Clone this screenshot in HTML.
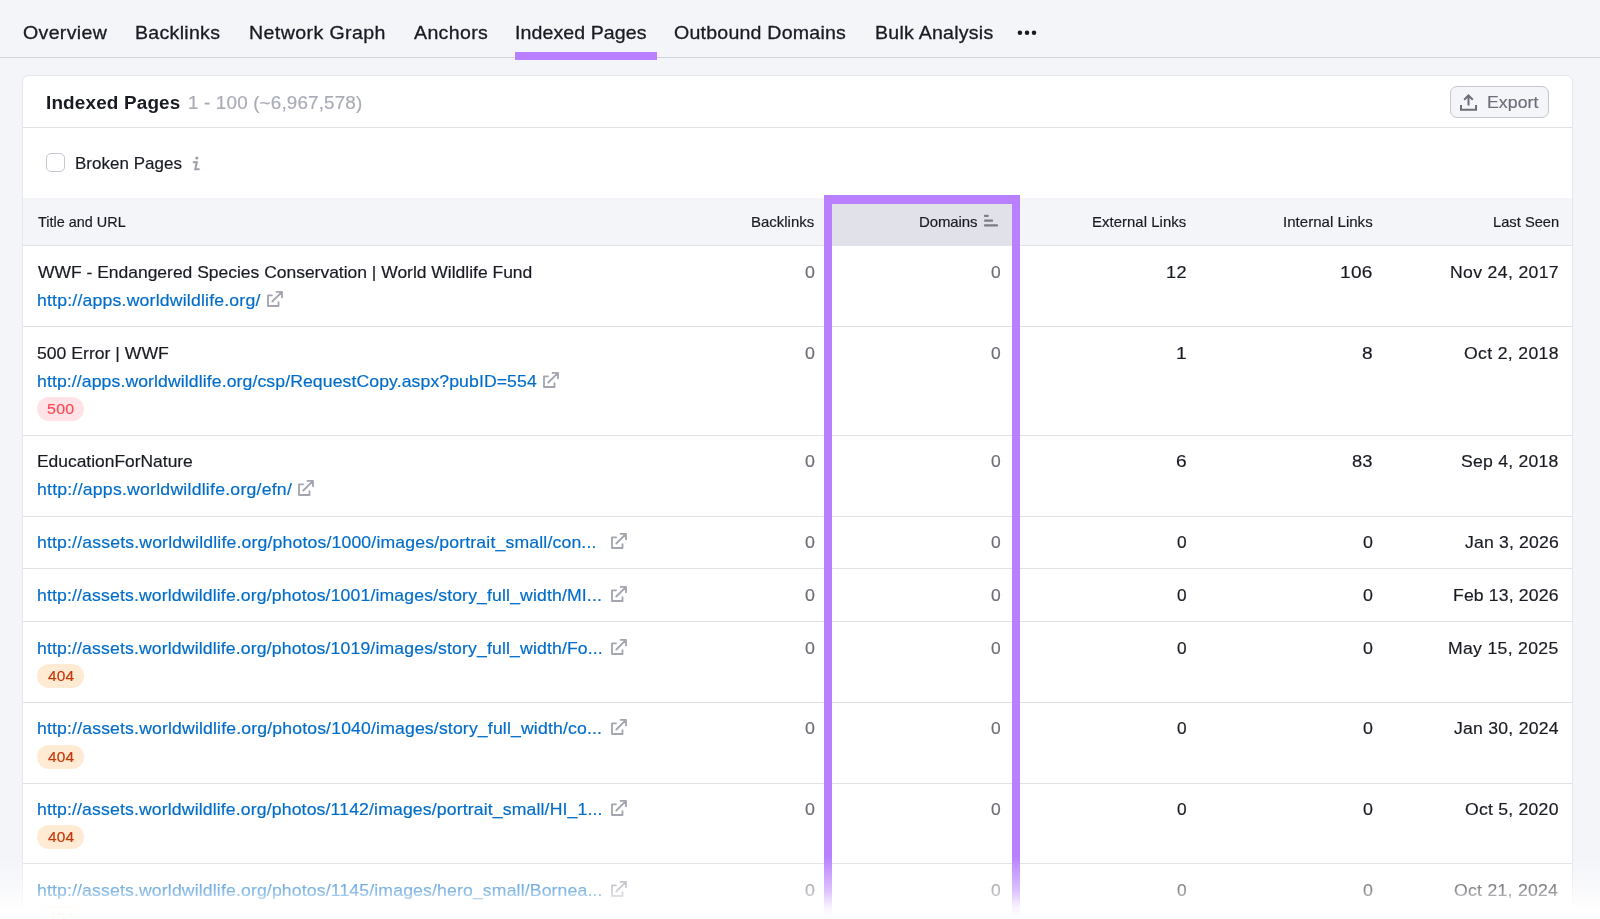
<!DOCTYPE html>
<html lang="en">
<head>
<meta charset="utf-8">
<title>Indexed Pages</title>
<style>
*{box-sizing:border-box;margin:0;padding:0}
html,body{width:1600px;height:919px;overflow:hidden}
body{background:#f4f5f9;font-family:"Liberation Sans",Arial,sans-serif;color:#191b23;position:relative}
/* every text node is placed by measured ink extents; .x = absolutely positioned text */
.x{position:absolute;white-space:pre;will-change:transform;transform-origin:0 0}
.tabline{position:absolute;left:0;top:57px;width:1600px;height:1px;background:#d1d4db}
.tab-ul{position:absolute;left:515px;top:52px;width:142px;height:8px;background:#b880ff}
.card{position:absolute;left:22px;top:75px;width:1551px;height:900px;background:#fff;border:1px solid #e6e7ee;border-radius:7px}
.hline{position:absolute;left:23px;width:1549px;height:1px;background:#e0e1e9}
.btn{position:absolute;left:1450px;top:86px;width:99px;height:32px;border:1px solid #c4c7cf;border-radius:7px;background:#f4f5f9}
.cb{position:absolute;left:46px;top:153px;width:19px;height:19px;border:1px solid #c4c7cf;border-radius:5px;background:#fff}
.thead-bg{position:absolute;left:23px;top:198px;width:1549px;height:47px;background:#f4f5f9}
.sorted{position:absolute;left:828px;top:198px;width:186px;height:47px;background:#e0e1e9}
.badge{position:absolute;width:47px;height:24px;border-radius:12px}
.b500{background:#ffe3e6}
.b404{background:#ffebd3}
.ext{position:absolute;overflow:visible}
.ic{position:absolute;overflow:visible}
.purple{position:absolute;left:824px;top:195px;width:196px;height:760px;border:8px solid #b880ff;border-top-width:9px;border-bottom:none}
.fade{position:absolute;left:0;top:856px;width:1600px;height:63px;background:linear-gradient(to bottom,rgba(255,255,255,0) 0%,rgba(255,255,255,.5) 54%,rgba(255,255,255,.9) 81%,rgba(255,255,255,1) 100%)}
</style>
</head>
<body>
<nav class="tabs">
<div class="tabline"></div>
<div class="x" style="left:22.8px;top:22.0px;font-size:18.2px;line-height:23px;color:#191b23;-webkit-text-stroke:0.3px;letter-spacing:0.315px;transform:scaleX(1.075);">Overview</div>
<div class="x" style="left:135.2px;top:22.0px;font-size:18.2px;line-height:23px;color:#191b23;-webkit-text-stroke:0.3px;letter-spacing:0.276px;transform:scaleX(1.075);">Backlinks</div>
<div class="x" style="left:248.5px;top:22.0px;font-size:18.2px;line-height:23px;color:#191b23;-webkit-text-stroke:0.3px;letter-spacing:0.381px;transform:scaleX(1.075);">Network Graph</div>
<div class="x" style="left:413.5px;top:22.0px;font-size:18.2px;line-height:23px;color:#191b23;-webkit-text-stroke:0.3px;letter-spacing:0.317px;transform:scaleX(1.075);">Anchors</div>
<div class="x" style="left:515.0px;top:22.0px;font-size:18.2px;line-height:23px;color:#191b23;-webkit-text-stroke:0.3px;letter-spacing:0.078px;transform:scaleX(1.075);">Indexed Pages</div>
<div class="x" style="left:674.0px;top:22.0px;font-size:18.2px;line-height:23px;color:#191b23;-webkit-text-stroke:0.3px;letter-spacing:0.209px;transform:scaleX(1.075);">Outbound Domains</div>
<div class="x" style="left:874.5px;top:22.0px;font-size:18.2px;line-height:23px;color:#191b23;-webkit-text-stroke:0.3px;letter-spacing:0.237px;transform:scaleX(1.075);">Bulk Analysis</div>
<svg class="ic" style="left:1016px;top:29px" width="22" height="8" viewBox="0 0 22 8"><circle cx="3.900" cy="3.800" r="2.250" fill="#191b23"/><circle cx="11" cy="3.800" r="2.250" fill="#191b23"/><circle cx="18" cy="3.800" r="2.250" fill="#191b23"/></svg>
<div class="tab-ul"></div>
</nav>
<main>
<div class="card"></div>
<header class="card-head">
<div class="x" style="left:46.0px;top:92.0px;font-size:17.6px;line-height:22px;color:#191b23;font-weight:bold;letter-spacing:0.144px;transform:scaleX(1.075);">Indexed Pages</div>
<div class="x" style="left:188.3px;top:92.0px;font-size:17.5px;line-height:22px;color:#a9abb6;-webkit-text-stroke:0.18px;letter-spacing:0.158px;transform:scaleX(1.075);">1 - 100 (~6,967,578)</div>
<div class="btn"></div>
<svg class="ic" style="left:1460px;top:93px" width="18" height="18" viewBox="0 0 18 18" fill="none" stroke="#6c6e79" stroke-width="2" stroke-linecap="butt" stroke-linejoin="miter"><path d="M8.500 12.500V3M4.200 6.800L8.500 2.500l4.300 4.300M1 12v4.700h15V12"/></svg>
<div class="x" style="left:1486.5px;top:92.0px;font-size:16.4px;line-height:20px;color:#6c6e79;-webkit-text-stroke:0.18px;letter-spacing:0.102px;transform:scaleX(1.075);">Export</div>
<div class="hline" style="top:127px"></div>
</header>
<div class="filters">
<div class="cb"></div>
<div class="x" style="left:74.5px;top:153.0px;font-size:16.4px;line-height:20px;color:#191b23;-webkit-text-stroke:0.18px;letter-spacing:0.044px;transform:scaleX(1.0343);">Broken Pages</div>
<svg class="ic" style="left:190px;top:155px" width="12" height="17" viewBox="0 0 12 17" fill="none" stroke="#9c9eaa" stroke-width="2" stroke-linejoin="miter"><circle cx="6.800" cy="3" r="1.600" fill="#9c9eaa" stroke="none"/><path d="M2.800 7.200H6.800L5.300 14.200H9.600"/></svg>
</div>
<div class="table">
<div class="thead">
<div class="thead-bg"></div>
<div class="sorted"></div>
<div class="hline" style="top:245px"></div>
<div class="x" style="left:38.0px;top:213.0px;font-size:14.3px;line-height:18px;color:#191b23;-webkit-text-stroke:0.18px;letter-spacing:0.008px;transform:scaleX(1.008);">Title and URL</div>
<div class="x" style="left:750.9px;top:213.0px;font-size:14.3px;line-height:18px;color:#191b23;-webkit-text-stroke:0.18px;letter-spacing:0.012px;transform:scaleX(1.0458);">Backlinks</div>
<div class="x" style="left:918.7px;top:213.0px;font-size:14.3px;line-height:18px;color:#191b23;-webkit-text-stroke:0.18px;letter-spacing:-0.08px;transform:scaleX(1.0455);">Domains</div>
<div class="x" style="left:1092.1px;top:213.0px;font-size:14.3px;line-height:18px;color:#191b23;-webkit-text-stroke:0.18px;letter-spacing:0.058px;transform:scaleX(1.0404);">External Links</div>
<div class="x" style="left:1283.0px;top:213.0px;font-size:14.3px;line-height:18px;color:#191b23;-webkit-text-stroke:0.18px;letter-spacing:0.014px;transform:scaleX(1.0524);">Internal Links</div>
<div class="x" style="left:1492.6px;top:213.0px;font-size:14.3px;line-height:18px;color:#191b23;-webkit-text-stroke:0.18px;letter-spacing:0.011px;transform:scaleX(1.027);">Last Seen</div>
<svg class="ic" style="left:983px;top:213px" width="16" height="14" viewBox="0 0 16 14" fill="none" stroke="#7b7d88" stroke-width="2.200" stroke-linecap="round"><path d="M2 2.900H4.700M2 7.700H9.100M2 12.400H14"/></svg>
</div>
<div class="row">
<svg class="ext" style="left:267px;top:291px" width="16" height="16" viewBox="0 0 16 16" fill="none" stroke="#a3a5b0" stroke-width="1.850" stroke-linecap="round" stroke-linejoin="round"><path d="M5 4.300H1V15H11.500V11.200"/><path d="M5.300 10.500L15 0.900M9.600 0.900H15V6.300"/></svg>
<div class="x" style="left:38.0px;top:262.0px;font-size:16.4px;line-height:20px;color:#191b23;-webkit-text-stroke:0.18px;letter-spacing:-0.009px;transform:scaleX(1.0665);">WWF - Endangered Species Conservation | World Wildlife Fund</div>
<div class="x" style="left:37.0px;top:290.0px;font-size:16.4px;line-height:20px;color:#006dca;-webkit-text-stroke:0.18px;letter-spacing:0.19px;transform:scaleX(1.075);">http://apps.worldwildlife.org/</div>
<div class="x" style="left:804.8px;top:262.0px;font-size:16.4px;line-height:20px;color:#6c6e79;-webkit-text-stroke:0.18px;transform:scaleX(1.0889);">0</div>
<div class="x" style="left:990.6px;top:262.0px;font-size:16.4px;line-height:20px;color:#6c6e79;-webkit-text-stroke:0.18px;transform:scaleX(1.0667);">0</div>
<div class="x" style="left:1165.5px;top:262.0px;font-size:16.4px;line-height:20px;color:#191b23;-webkit-text-stroke:0.18px;letter-spacing:0.361px;transform:scaleX(1.1059);">12</div>
<div class="x" style="left:1339.8px;top:262.0px;font-size:16.4px;line-height:20px;color:#191b23;-webkit-text-stroke:0.18px;letter-spacing:0.258px;transform:scaleX(1.1615);">106</div>
<div class="x" style="left:1449.5px;top:262.0px;font-size:16.4px;line-height:20px;color:#191b23;-webkit-text-stroke:0.18px;letter-spacing:0.321px;transform:scaleX(1.075);">Nov 24, 2017</div>
<div class="hline" style="top:326px"></div>
</div>
<div class="row">
<svg class="ext" style="left:543px;top:371.6px" width="16" height="16" viewBox="0 0 16 16" fill="none" stroke="#a3a5b0" stroke-width="1.850" stroke-linecap="round" stroke-linejoin="round"><path d="M5 4.300H1V15H11.500V11.200"/><path d="M5.300 10.500L15 0.900M9.600 0.900H15V6.300"/></svg>
<div class="badge b500" style="left:37px;top:397px"></div>
<div class="x" style="left:37.0px;top:343.0px;font-size:16.4px;line-height:20px;color:#191b23;-webkit-text-stroke:0.18px;transform:scaleX(1.0744);">500 Error | WWF</div>
<div class="x" style="left:37.0px;top:371.0px;font-size:16.4px;line-height:20px;color:#006dca;-webkit-text-stroke:0.18px;letter-spacing:0.093px;transform:scaleX(1.075);">http://apps.worldwildlife.org/csp/RequestCopy.aspx?pubID=554</div>
<div class="x" style="left:46.6px;top:400.0px;font-size:14.8px;line-height:18px;color:#ff4953;-webkit-text-stroke:0.18px;letter-spacing:0.315px;transform:scaleX(1.075);">500</div>
<div class="x" style="left:804.8px;top:343.0px;font-size:16.4px;line-height:20px;color:#6c6e79;-webkit-text-stroke:0.18px;transform:scaleX(1.0889);">0</div>
<div class="x" style="left:990.6px;top:343.0px;font-size:16.4px;line-height:20px;color:#6c6e79;-webkit-text-stroke:0.18px;transform:scaleX(1.0667);">0</div>
<div class="x" style="left:1175.5px;top:343.0px;font-size:16.4px;line-height:20px;color:#191b23;-webkit-text-stroke:0.18px;transform:scaleX(1.17);">1</div>
<div class="x" style="left:1361.8px;top:343.0px;font-size:16.4px;line-height:20px;color:#191b23;-webkit-text-stroke:0.18px;transform:scaleX(1.17);">8</div>
<div class="x" style="left:1463.5px;top:343.0px;font-size:16.4px;line-height:20px;color:#191b23;-webkit-text-stroke:0.18px;letter-spacing:0.313px;transform:scaleX(1.075);">Oct 2, 2018</div>
<div class="hline" style="top:435px"></div>
</div>
<div class="row">
<svg class="ext" style="left:298px;top:480px" width="16" height="16" viewBox="0 0 16 16" fill="none" stroke="#a3a5b0" stroke-width="1.850" stroke-linecap="round" stroke-linejoin="round"><path d="M5 4.300H1V15H11.500V11.200"/><path d="M5.300 10.500L15 0.900M9.600 0.900H15V6.300"/></svg>
<div class="x" style="left:37.0px;top:451.0px;font-size:16.4px;line-height:20px;color:#191b23;-webkit-text-stroke:0.18px;transform:scaleX(1.0621);">EducationForNature</div>
<div class="x" style="left:37.0px;top:479.0px;font-size:16.4px;line-height:20px;color:#006dca;-webkit-text-stroke:0.18px;letter-spacing:0.225px;transform:scaleX(1.075);">http://apps.worldwildlife.org/efn/</div>
<div class="x" style="left:804.8px;top:451.0px;font-size:16.4px;line-height:20px;color:#6c6e79;-webkit-text-stroke:0.18px;transform:scaleX(1.0889);">0</div>
<div class="x" style="left:990.6px;top:451.0px;font-size:16.4px;line-height:20px;color:#6c6e79;-webkit-text-stroke:0.18px;transform:scaleX(1.0667);">0</div>
<div class="x" style="left:1175.5px;top:451.0px;font-size:16.4px;line-height:20px;color:#191b23;-webkit-text-stroke:0.18px;transform:scaleX(1.17);">6</div>
<div class="x" style="left:1351.8px;top:451.0px;font-size:16.4px;line-height:20px;color:#191b23;-webkit-text-stroke:0.18px;letter-spacing:0.001px;transform:scaleX(1.1176);">83</div>
<div class="x" style="left:1460.5px;top:451.0px;font-size:16.4px;line-height:20px;color:#191b23;-webkit-text-stroke:0.18px;letter-spacing:0.213px;transform:scaleX(1.075);">Sep 4, 2018</div>
<div class="hline" style="top:516px"></div>
</div>
<div class="row">
<svg class="ext" style="left:611px;top:533px" width="16" height="16" viewBox="0 0 16 16" fill="none" stroke="#a3a5b0" stroke-width="1.850" stroke-linecap="round" stroke-linejoin="round"><path d="M5 4.300H1V15H11.500V11.200"/><path d="M5.300 10.500L15 0.900M9.600 0.900H15V6.300"/></svg>
<div class="x" style="left:37.0px;top:532.0px;font-size:16.4px;line-height:20px;color:#006dca;-webkit-text-stroke:0.18px;letter-spacing:0.156px;transform:scaleX(1.075);">http://assets.worldwildlife.org/photos/1000/images/portrait_small/con...</div>
<div class="x" style="left:804.8px;top:532.0px;font-size:16.4px;line-height:20px;color:#6c6e79;-webkit-text-stroke:0.18px;transform:scaleX(1.0889);">0</div>
<div class="x" style="left:990.6px;top:532.0px;font-size:16.4px;line-height:20px;color:#6c6e79;-webkit-text-stroke:0.18px;transform:scaleX(1.0667);">0</div>
<div class="x" style="left:1176.5px;top:532.0px;font-size:16.4px;line-height:20px;color:#191b23;-webkit-text-stroke:0.18px;transform:scaleX(1.0556);">0</div>
<div class="x" style="left:1362.8px;top:532.0px;font-size:16.4px;line-height:20px;color:#191b23;-webkit-text-stroke:0.18px;transform:scaleX(1.0889);">0</div>
<div class="x" style="left:1464.5px;top:532.0px;font-size:16.4px;line-height:20px;color:#191b23;-webkit-text-stroke:0.18px;letter-spacing:0.151px;transform:scaleX(1.075);">Jan 3, 2026</div>
<div class="hline" style="top:568px"></div>
</div>
<div class="row">
<svg class="ext" style="left:611px;top:586px" width="16" height="16" viewBox="0 0 16 16" fill="none" stroke="#a3a5b0" stroke-width="1.850" stroke-linecap="round" stroke-linejoin="round"><path d="M5 4.300H1V15H11.500V11.200"/><path d="M5.300 10.500L15 0.900M9.600 0.900H15V6.300"/></svg>
<div class="x" style="left:37.0px;top:585.0px;font-size:16.4px;line-height:20px;color:#006dca;-webkit-text-stroke:0.18px;letter-spacing:0.136px;transform:scaleX(1.075);">http://assets.worldwildlife.org/photos/1001/images/story_full_width/MI...</div>
<div class="x" style="left:804.8px;top:585.0px;font-size:16.4px;line-height:20px;color:#6c6e79;-webkit-text-stroke:0.18px;transform:scaleX(1.0889);">0</div>
<div class="x" style="left:990.6px;top:585.0px;font-size:16.4px;line-height:20px;color:#6c6e79;-webkit-text-stroke:0.18px;transform:scaleX(1.0667);">0</div>
<div class="x" style="left:1176.5px;top:585.0px;font-size:16.4px;line-height:20px;color:#191b23;-webkit-text-stroke:0.18px;transform:scaleX(1.0556);">0</div>
<div class="x" style="left:1362.8px;top:585.0px;font-size:16.4px;line-height:20px;color:#191b23;-webkit-text-stroke:0.18px;transform:scaleX(1.0889);">0</div>
<div class="x" style="left:1452.5px;top:585.0px;font-size:16.4px;line-height:20px;color:#191b23;-webkit-text-stroke:0.18px;letter-spacing:0.141px;transform:scaleX(1.075);">Feb 13, 2026</div>
<div class="hline" style="top:621px"></div>
</div>
<div class="row">
<svg class="ext" style="left:611px;top:639px" width="16" height="16" viewBox="0 0 16 16" fill="none" stroke="#a3a5b0" stroke-width="1.850" stroke-linecap="round" stroke-linejoin="round"><path d="M5 4.300H1V15H11.500V11.200"/><path d="M5.300 10.500L15 0.900M9.600 0.900H15V6.300"/></svg>
<div class="badge b404" style="left:37px;top:664px"></div>
<div class="x" style="left:37.0px;top:638.0px;font-size:16.4px;line-height:20px;color:#006dca;-webkit-text-stroke:0.18px;letter-spacing:0.135px;transform:scaleX(1.075);">http://assets.worldwildlife.org/photos/1019/images/story_full_width/Fo...</div>
<div class="x" style="left:47.6px;top:667.0px;font-size:14.8px;line-height:18px;color:#c33909;-webkit-text-stroke:0.18px;letter-spacing:0.144px;transform:scaleX(1.044);">404</div>
<div class="x" style="left:804.8px;top:638.0px;font-size:16.4px;line-height:20px;color:#6c6e79;-webkit-text-stroke:0.18px;transform:scaleX(1.0889);">0</div>
<div class="x" style="left:990.6px;top:638.0px;font-size:16.4px;line-height:20px;color:#6c6e79;-webkit-text-stroke:0.18px;transform:scaleX(1.0667);">0</div>
<div class="x" style="left:1176.5px;top:638.0px;font-size:16.4px;line-height:20px;color:#191b23;-webkit-text-stroke:0.18px;transform:scaleX(1.0556);">0</div>
<div class="x" style="left:1362.8px;top:638.0px;font-size:16.4px;line-height:20px;color:#191b23;-webkit-text-stroke:0.18px;transform:scaleX(1.0889);">0</div>
<div class="x" style="left:1447.5px;top:638.0px;font-size:16.4px;line-height:20px;color:#191b23;-webkit-text-stroke:0.18px;letter-spacing:0.292px;transform:scaleX(1.075);">May 15, 2025</div>
<div class="hline" style="top:702px"></div>
</div>
<div class="row">
<svg class="ext" style="left:611px;top:719px" width="16" height="16" viewBox="0 0 16 16" fill="none" stroke="#a3a5b0" stroke-width="1.850" stroke-linecap="round" stroke-linejoin="round"><path d="M5 4.300H1V15H11.500V11.200"/><path d="M5.300 10.500L15 0.900M9.600 0.900H15V6.300"/></svg>
<div class="badge b404" style="left:37px;top:745px"></div>
<div class="x" style="left:37.0px;top:718.0px;font-size:16.4px;line-height:20px;color:#006dca;-webkit-text-stroke:0.18px;letter-spacing:0.149px;transform:scaleX(1.075);">http://assets.worldwildlife.org/photos/1040/images/story_full_width/co...</div>
<div class="x" style="left:47.6px;top:748.0px;font-size:14.8px;line-height:18px;color:#c33909;-webkit-text-stroke:0.18px;letter-spacing:0.144px;transform:scaleX(1.044);">404</div>
<div class="x" style="left:804.8px;top:718.0px;font-size:16.4px;line-height:20px;color:#6c6e79;-webkit-text-stroke:0.18px;transform:scaleX(1.0889);">0</div>
<div class="x" style="left:990.6px;top:718.0px;font-size:16.4px;line-height:20px;color:#6c6e79;-webkit-text-stroke:0.18px;transform:scaleX(1.0667);">0</div>
<div class="x" style="left:1176.5px;top:718.0px;font-size:16.4px;line-height:20px;color:#191b23;-webkit-text-stroke:0.18px;transform:scaleX(1.0556);">0</div>
<div class="x" style="left:1362.8px;top:718.0px;font-size:16.4px;line-height:20px;color:#191b23;-webkit-text-stroke:0.18px;transform:scaleX(1.0889);">0</div>
<div class="x" style="left:1453.5px;top:718.0px;font-size:16.4px;line-height:20px;color:#191b23;-webkit-text-stroke:0.18px;letter-spacing:0.226px;transform:scaleX(1.075);">Jan 30, 2024</div>
<div class="hline" style="top:783px"></div>
</div>
<div class="row">
<svg class="ext" style="left:611px;top:800px" width="16" height="16" viewBox="0 0 16 16" fill="none" stroke="#a3a5b0" stroke-width="1.850" stroke-linecap="round" stroke-linejoin="round"><path d="M5 4.300H1V15H11.500V11.200"/><path d="M5.300 10.500L15 0.900M9.600 0.900H15V6.300"/></svg>
<div class="badge b404" style="left:37px;top:825px"></div>
<div class="x" style="left:37.0px;top:799.0px;font-size:16.4px;line-height:20px;color:#006dca;-webkit-text-stroke:0.18px;letter-spacing:0.135px;transform:scaleX(1.075);">http://assets.worldwildlife.org/photos/1142/images/portrait_small/HI_1...</div>
<div class="x" style="left:47.6px;top:828.0px;font-size:14.8px;line-height:18px;color:#c33909;-webkit-text-stroke:0.18px;letter-spacing:0.144px;transform:scaleX(1.044);">404</div>
<div class="x" style="left:804.8px;top:799.0px;font-size:16.4px;line-height:20px;color:#6c6e79;-webkit-text-stroke:0.18px;transform:scaleX(1.0889);">0</div>
<div class="x" style="left:990.6px;top:799.0px;font-size:16.4px;line-height:20px;color:#6c6e79;-webkit-text-stroke:0.18px;transform:scaleX(1.0667);">0</div>
<div class="x" style="left:1176.5px;top:799.0px;font-size:16.4px;line-height:20px;color:#191b23;-webkit-text-stroke:0.18px;transform:scaleX(1.0556);">0</div>
<div class="x" style="left:1362.8px;top:799.0px;font-size:16.4px;line-height:20px;color:#191b23;-webkit-text-stroke:0.18px;transform:scaleX(1.0889);">0</div>
<div class="x" style="left:1464.5px;top:799.0px;font-size:16.4px;line-height:20px;color:#191b23;-webkit-text-stroke:0.18px;letter-spacing:0.22px;transform:scaleX(1.075);">Oct 5, 2020</div>
<div class="hline" style="top:863px"></div>
</div>
<div class="row">
<svg class="ext" style="left:611px;top:881px" width="16" height="16" viewBox="0 0 16 16" fill="none" stroke="#a3a5b0" stroke-width="1.850" stroke-linecap="round" stroke-linejoin="round"><path d="M5 4.300H1V15H11.500V11.200"/><path d="M5.300 10.500L15 0.900M9.600 0.900H15V6.300"/></svg>
<div class="badge b404" style="left:37px;top:906px"></div>
<div class="x" style="left:37.0px;top:880.0px;font-size:16.4px;line-height:20px;color:#006dca;-webkit-text-stroke:0.18px;letter-spacing:0.139px;transform:scaleX(1.075);">http://assets.worldwildlife.org/photos/1145/images/hero_small/Bornea...</div>
<div class="x" style="left:47.6px;top:909.0px;font-size:14.8px;line-height:18px;color:#c33909;-webkit-text-stroke:0.18px;letter-spacing:0.144px;transform:scaleX(1.044);">404</div>
<div class="x" style="left:804.8px;top:880.0px;font-size:16.4px;line-height:20px;color:#6c6e79;-webkit-text-stroke:0.18px;transform:scaleX(1.0889);">0</div>
<div class="x" style="left:990.6px;top:880.0px;font-size:16.4px;line-height:20px;color:#6c6e79;-webkit-text-stroke:0.18px;transform:scaleX(1.0667);">0</div>
<div class="x" style="left:1176.5px;top:880.0px;font-size:16.4px;line-height:20px;color:#191b23;-webkit-text-stroke:0.18px;transform:scaleX(1.0556);">0</div>
<div class="x" style="left:1362.8px;top:880.0px;font-size:16.4px;line-height:20px;color:#191b23;-webkit-text-stroke:0.18px;transform:scaleX(1.0889);">0</div>
<div class="x" style="left:1453.5px;top:880.0px;font-size:16.4px;line-height:20px;color:#191b23;-webkit-text-stroke:0.18px;letter-spacing:0.256px;transform:scaleX(1.075);">Oct 21, 2024</div>
</div>
</div>
</main>
<div class="purple"></div>
<div class="fade"></div>
</body>
</html>
